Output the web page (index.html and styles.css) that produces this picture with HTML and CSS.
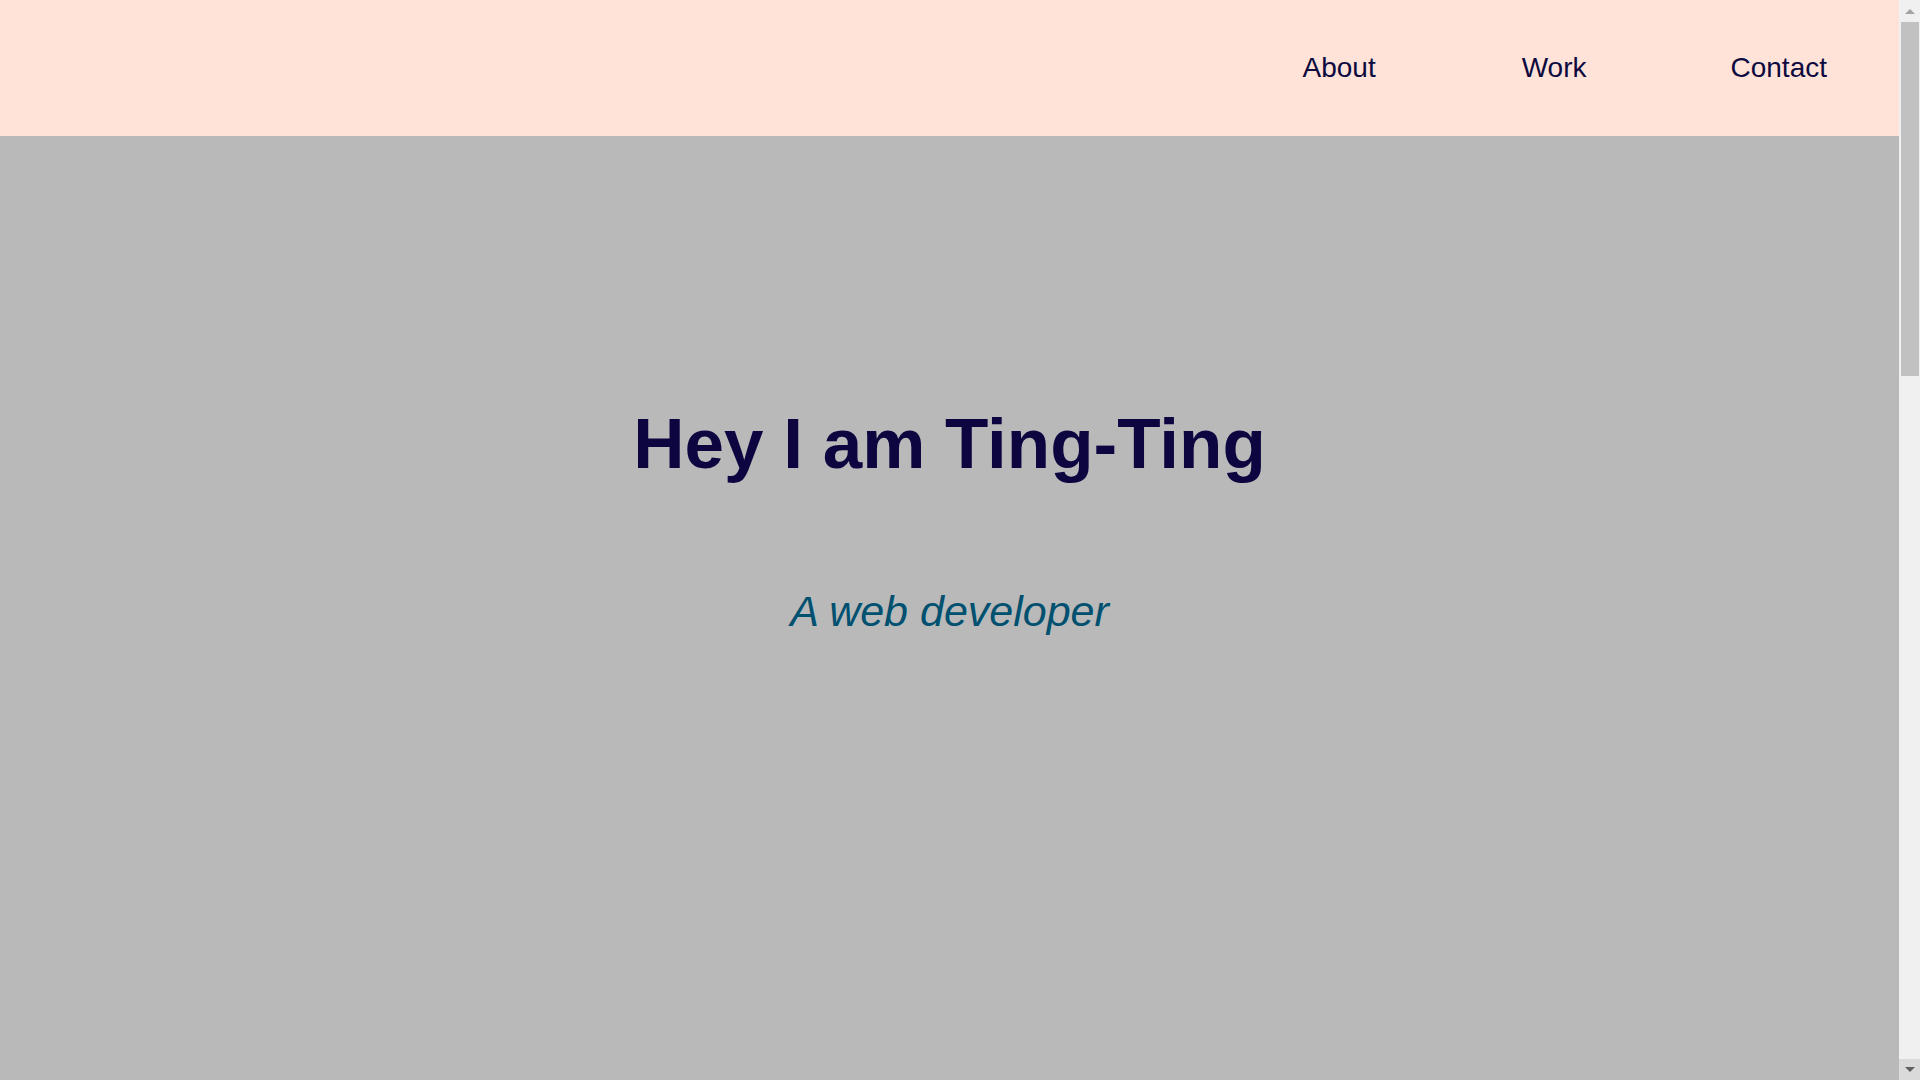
FILE: index.html
```html
<!DOCTYPE html>
<html lang="en">
<head>
<meta charset="utf-8">
<title>Ting-Ting</title>
<link rel="stylesheet" href="styles.css">
</head>
<body>
<div class="page">
  <header class="site-header">
    <nav class="nav">
      <a class="nav-link" href="#about">About</a>
      <a class="nav-link" href="#work">Work</a>
      <a class="nav-link" href="#contact">Contact</a>
    </nav>
  </header>
  <main class="hero">
    <h1 class="hero-title">Hey I am Ting-Ting</h1>
    <p class="hero-subtitle">A web developer</p>
  </main>
</div>
<div class="scrollbar" aria-hidden="true">
  <div class="sb-btn sb-up">
    <svg width="10" height="5" viewBox="0 0 10 5"><polygon points="5,0 10,5 0,5" fill="#a3a3a3"/></svg>
  </div>
  <div class="sb-track">
    <div class="sb-thumb"></div>
  </div>
  <div class="sb-btn sb-down">
    <svg width="10" height="5" viewBox="0 0 10 5"><polygon points="0,0 10,0 5,5" fill="#5f5f5f"/></svg>
  </div>
</div>
</body>
</html>
```
FILE: styles.css
```css
html, body {
  margin: 0;
  padding: 0;
}
body {
  font-family: "Liberation Sans", Arial, sans-serif;
  background: #b9b9b9;
  overflow: hidden;
}
.page {
  margin-right: 21px;
  min-height: 100vh;
  display: flex;
  flex-direction: column;
}
.site-header {
  height: 136px;
  flex: none;
  background: #ffe3d8;
  display: flex;
  align-items: center;
  justify-content: flex-end;
  padding-right: 72px;
}
.nav {
  display: flex;
}
.nav-link {
  font-size: 28px;
  color: #0d0a40;
  text-decoration: none;
}
.nav-link + .nav-link {
  margin-left: 144px;
}
.nav-link:first-child {
  margin-right: 2px;
}
.hero {
  flex: 1;
  padding-top: 266px;
  text-align: center;
  background: #b9b9b9;
}
.hero-title {
  margin: 0;
  font-size: 71px;
  font-weight: bold;
  color: #0c0540;
  line-height: 83px;
}
.hero-subtitle {
  margin: 102px 0 0;
  font-size: 43px;
  font-style: italic;
  color: #005070;
  line-height: 48px;
}
.scrollbar {
  position: fixed;
  top: 0;
  right: 0;
  width: 21px;
  height: 100vh;
  background: #f0f0f0;
  display: flex;
  flex-direction: column;
}
.sb-btn {
  height: 21px;
  flex: none;
  display: flex;
  justify-content: center;
  align-items: flex-start;
  box-sizing: border-box;
}
.sb-up {
  padding-top: 9px;
}
.sb-down {
  background: #dadada;
  padding-top: 8px;
}
.sb-btn svg {
  display: block;
  margin-left: 1px;
}
.sb-track {
  flex: 1;
  padding: 1px 1px 0 2px;
}
.sb-thumb {
  height: 354px;
  background: #c1c1c1;
}
```
